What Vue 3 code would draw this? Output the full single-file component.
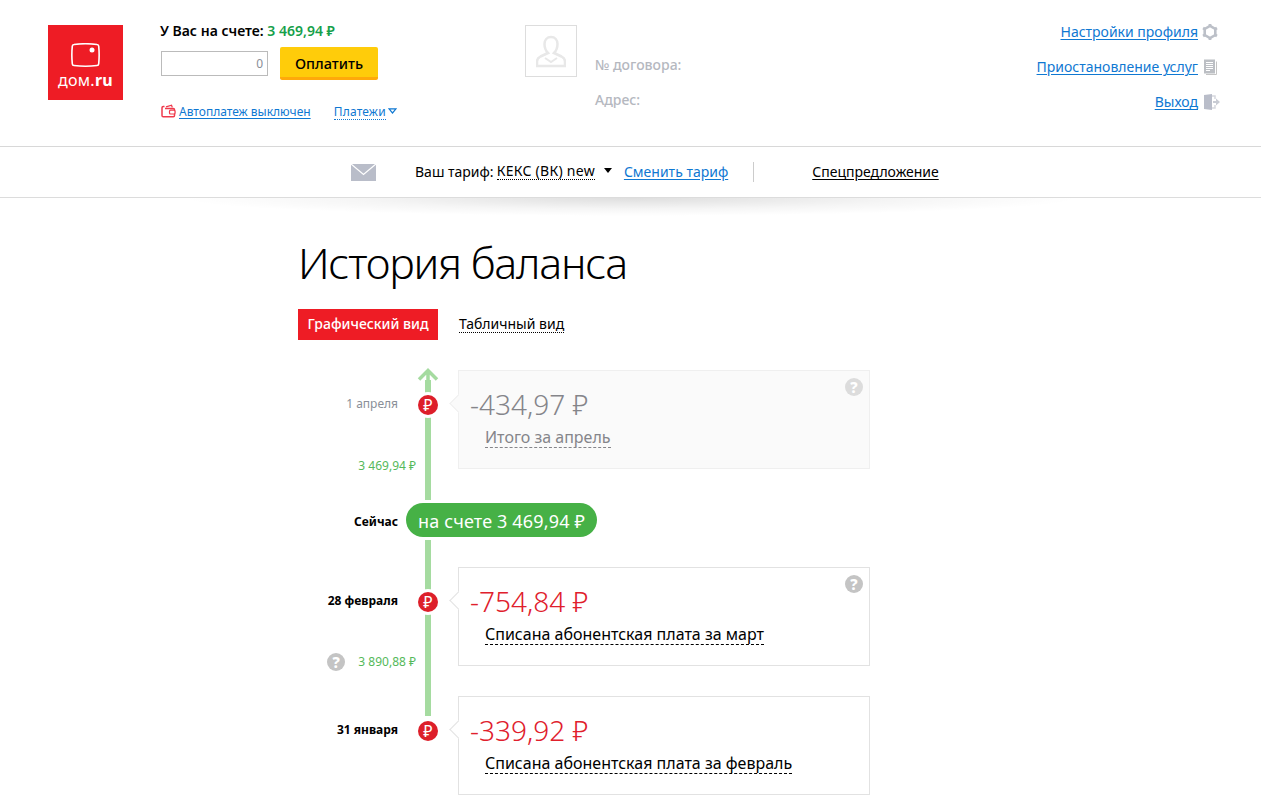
<template>
  <div class="page">
    <header class="top">
      <div class="logo">
        <svg width="29" height="25" viewBox="0 0 29 25">
          <path d="M3 1.500C10 .6 19 .6 26 1.500 27 1.600 27.600 2.200 27.700 3.200 28.300 9 28.300 15 27.700 20.800 27.600 21.800 27 22.400 26 22.500 19 23.400 10 23.400 3 22.500 2 22.400 1.400 21.800 1.300 20.800.7 15 .7 9 1.300 3.200 1.400 2.200 2 1.600 3 1.500Z" fill="none" stroke="#fff" stroke-width="1.600"/>
          <circle cx="21" cy="7" r="2.500" fill="#fff"/>
        </svg>
        <div class="logo__text">дом.<b>ru</b></div>
      </div>

      <div class="pay">
        <div class="pay__balance">У Вас на счете: <span class="pay__sum">3 469,94 ₽</span></div>
        <div class="pay__form">
          <div class="pay__input">0</div>
          <button class="pay__btn">Оплатить</button>
        </div>
        <div class="pay__links">
          <svg class="pay__wallet" width="15" height="14" viewBox="0 0 15 14">
            <path d="M3.500 2.500H2.200Q1 2.500 1 3.700V11.500Q1 12.800 2.200 12.800H12.300Q13.500 12.800 13.500 11.500V5.700Q13.500 4.500 12.300 4.500H4" fill="none" stroke="#ef3a4c" stroke-width="1.500"/>
            <path d="M5 2.800 10.500 1.200 11.300 3.400" fill="none" stroke="#ef3a4c" stroke-width="1.300"/>
            <rect x="8.500" y="6.200" width="5.500" height="3.800" rx="1" fill="#fff" stroke="#ef3a4c" stroke-width="1.200"/>
          </svg>
          <a class="link">Автоплатеж выключен</a>
          <a class="pay__drop">Платежи</a>
          <svg class="pay__tri" width="9" height="6" viewBox="0 0 9 6"><path d="M1 .8H8L4.500 5Z" fill="none" stroke="#0f78d2" stroke-width="1.200"/></svg>
        </div>
      </div>

      <div class="contract">
        <div class="contract__pic">
          <svg width="30" height="33" viewBox="0 0 30 33">
            <path d="M15 2c4 0 6.500 3 6.500 7s-2 7.500-3.500 9l7.500 3.500c2 1 3.500 2.500 3.500 5V31H1v-4.500c0-2.500 1.500-4 3.500-5L12 18c-1.500-1.500-3.500-5-3.500-9s2.500-7 6.500-7Z" fill="none" stroke="#e8e8e8" stroke-width="2.500"/>
            <path d="M9 23l6 4 6-4" fill="none" stroke="#e8e8e8" stroke-width="2"/>
          </svg>
        </div>
        <div class="contract__info">
          <div>№ договора:</div>
          <div>Адрес:</div>
        </div>
      </div>

      <nav class="menu">
        <div class="menu__row">
          <a class="link">Настройки профиля</a>
          <svg width="18" height="16" viewBox="0 0 18 16">
            <path d="M8 1.900 13.300 5V11L8 14.100 2.700 11V5Z" fill="none" stroke="#bcc0c8" stroke-width="2.600"/>
            <g fill="#bcc0c8">
              <rect x="6.600" y="0" width="2.800" height="2"/>
              <rect x="6.600" y="14" width="2.800" height="2"/>
              <rect x="6.600" y="0" width="2.800" height="2" transform="rotate(60 8 8)"/>
              <rect x="6.600" y="0" width="2.800" height="2" transform="rotate(120 8 8)"/>
              <rect x="6.600" y="0" width="2.800" height="2" transform="rotate(240 8 8)"/>
              <rect x="6.600" y="0" width="2.800" height="2" transform="rotate(300 8 8)"/>
            </g>
          </svg>
        </div>
        <div class="menu__row">
          <a class="link">Приостановление услуг</a>
          <svg width="18" height="16" viewBox="0 0 18 16">
            <path d="M14.500 2.500V15.500H4" fill="none" stroke="#c4c4c4"/>
            <rect x="2" y="0.500" width="11" height="14" fill="#bcbfc4"/>
            <path d="M4 3.500h7M4 5.500h7M4 7.500h7M4 9.500h7M4 11.500h4" stroke="#fff"/>
          </svg>
        </div>
        <div class="menu__row">
          <a class="link">Выход</a>
          <svg width="18" height="16" viewBox="0 0 18 16">
            <path d="M2 1 10 0V16L2 15Z" fill="#b9bdc9"/>
            <path d="M10 2h3v3M13 11v3h-3" fill="none" stroke="#d6d8de" stroke-width="1.500"/>
            <path d="M11 7h3V4.500L18 8l-4 3.500V9h-3Z" fill="#c9ccd4"/>
          </svg>
        </div>
      </nav>
    </header>

    <div class="tariff">
      <svg class="tariff__mail" width="25" height="17" viewBox="0 0 25 17">
        <path d="M0 0H25V17H0Z" fill="#b9bdc9"/>
        <path d="M0 0 12.500 10.500 25 0" fill="none" stroke="#fff" stroke-width="1.300"/>
      </svg>
      <span class="tariff__label">Ваш тариф:</span>
      <span class="tariff__name">КЕКС (ВК) new</span>
      <span class="tariff__tri"></span>
      <a class="link tariff__change">Сменить тариф</a>
      <span class="tariff__sep"></span>
      <a class="tariff__offer">Спецпредложение</a>
    </div>

    <main class="main">
      <h1 class="title">История баланса</h1>

      <div class="tabs">
        <span class="tabs__on">Графический вид</span>
        <span class="tabs__off">Табличный вид</span>
      </div>

      <div class="line">
        <svg class="line__arrow" width="22" height="22" viewBox="0 0 22 22">
          <path d="M2 11.500 11 2.500l9 9M11 3V22" fill="none" stroke="#a5dba0" stroke-width="3.500"/>
        </svg>

        <div v-for="row in rows" :key="row.date" class="row" :class="{ 'row--last': row.last }">
          <template v-if="row.now">
            <div class="row__date row__date--now">{{ row.date }}</div>
            <div class="pill">на счете 3 469,94 ₽</div>
          </template>
          <template v-else>
            <div class="row__side" :class="{ 'row__side--muted': row.muted }">
              <div class="row__date">{{ row.date }}</div>
              <div v-if="row.balance" class="row__balance">
                <span v-if="row.hint" class="hint hint--side">?</span>
                {{ row.balance }}
              </div>
            </div>
            <div class="row__dot">₽</div>
            <div class="card" :class="{ 'card--muted': row.muted }">
              <span v-if="row.help" class="hint hint--card">?</span>
              <div class="card__sum">{{ row.sum }}</div>
              <div class="card__text"><span>{{ row.text }}</span></div>
            </div>
          </template>
        </div>
      </div>
    </main>
  </div>
</template>

<script setup>
const rows = [
  { date: '1 апреля', balance: '3 469,94 ₽', sum: '-434,97 ₽', text: 'Итого за апрель', muted: true, help: true },
  { date: 'Сейчас', now: true },
  { date: '28 февраля', balance: '3 890,88 ₽', hint: true, sum: '-754,84 ₽', text: 'Списана абонентская плата за март', help: true },
  { date: '31 января', sum: '-339,92 ₽', text: 'Списана абонентская плата за февраль', last: true },
]
</script>

<style>
html, body {
  margin: 0;
  background: #fff;
  overflow: hidden;
}
</style>

<style scoped>
.page {
  font-family: "Noto Sans", "Open Sans", sans-serif;
  color: #000;
  font-size: 14px;
  height: 809px;
  overflow: hidden;
}
.link {
  color: #0f78d2;
  text-decoration: underline;
  text-underline-offset: 2px;
  cursor: pointer;
}

.top {
  display: flex;
  height: 146px;
  box-sizing: border-box;
  padding: 25px 41px 0 48px;
}
.logo {
  width: 75px;
  height: 75px;
  background: #ee1c25;
  display: flex;
  flex-direction: column;
  align-items: center;
  padding-top: 18px;
  box-sizing: border-box;
  color: #fff;
}
.logo__text {
  font-size: 16px;
  line-height: 17px;
  margin-top: 4px;
  letter-spacing: .3px;
}

.pay {
  margin-left: 37px;
  width: 365px;
}
.pay__balance {
  font-size: 14px;
  font-weight: 600;
  line-height: 18px;
  margin-top: -3px;
}
.pay__sum {
  color: #16a04a;
}
.pay__form {
  display: flex;
  align-items: flex-start;
  margin-top: 7px;
}
.pay__input {
  width: 101px;
  height: 23px;
  border: 1px solid #bbb;
  margin: 4px 12px 0 1px;
  text-align: right;
  padding-right: 4px;
  font-size: 12px;
  line-height: 23px;
  color: #8a8f98;
}
.pay__btn {
  width: 98px;
  height: 33px;
  border: 0;
  border-bottom: 3px solid #ffa90a;
  border-radius: 2px;
  background: #ffcc0a;
  font-family: inherit;
  font-size: 14.500px;
  font-weight: 500;
  padding: 2px 0 0;
  color: #000;
}
.pay__links {
  display: flex;
  align-items: center;
  margin-top: 23px;
  font-size: 12px;
  line-height: 18px;
}
.pay__wallet {
  margin: 0 3px 2px 1px;
}
.pay__drop {
  margin-left: 23px;
  color: #0f78d2;
  border-bottom: 1px dotted #0f78d2;
  line-height: 15px;
  letter-spacing: .2px;
}
.pay__tri {
  margin: 0 0 3px 2px;
}

.contract {
  display: flex;
  width: 400px;
}
.contract__pic {
  width: 50px;
  height: 50px;
  border: 1px solid #ddd;
  display: flex;
  align-items: center;
  justify-content: center;
}
.contract__info {
  margin-left: 18px;
  padding-top: 30px;
  color: #b5b8bf;
  font-size: 14px;
  font-weight: 500;
  line-height: 19px;
  display: flex;
  flex-direction: column;
  gap: 16px;
}

.menu {
  flex: 1;
  display: flex;
  flex-direction: column;
  align-items: flex-end;
  gap: 17px;
  margin-top: -2px;
}
.menu__row {
  display: flex;
  align-items: center;
  gap: 4px;
  font-size: 14px;
  line-height: 18px;
}

.tariff {
  height: 50px;
  box-sizing: content-box;
  border-top: 1px solid #d8d8d8;
  border-bottom: 1px solid #dcdcdc;
  display: flex;
  align-items: center;
  padding-left: 351px;
  position: relative;
  font-size: 14px;
  background: #fff;
}
.tariff::after {
  content: "";
  position: absolute;
  left: 180px;
  right: 180px;
  top: 100%;
  height: 18px;
  margin-top: 1px;
  background: radial-gradient(ellipse 50% 100% at 50% 0, rgba(0, 0, 0, .13), rgba(0, 0, 0, .04) 60%, transparent 100%);
}
.tariff__mail {
  margin: 0 39px 0 0;
}
.tariff__label {
  margin: -2px 3px 0 0;
}
.tariff__name {
  border-bottom: 1px dotted #000;
  line-height: 17px;
  letter-spacing: .27px;
  margin-top: -2px;
}
.tariff__tri {
  width: 0;
  height: 0;
  border: 4px solid transparent;
  border-top: 5px solid #000;
  border-bottom: 0;
  margin: 0 12px 4px 9px;
}
.tariff__change {
  margin-top: -2px;
}
.tariff__sep {
  width: 1px;
  height: 20px;
  background: #ccc;
  margin: 0 58px 0 25px;
}
.tariff__offer {
  color: #000;
  text-decoration: underline;
  text-underline-offset: 2px;
  margin-top: -2px;
}

.main {
  padding-left: 298px;
}
.title {
  margin: 36px 0 0 0;
  font-size: 43px;
  font-weight: 300;
  line-height: 58px;
  letter-spacing: -1.200px;
}
.tabs {
  display: flex;
  align-items: center;
  margin-top: 17px;
  font-size: 14px;
}
.tabs__on {
  background: #ee1c25;
  color: #fff;
  width: 140px;
  height: 31px;
  line-height: 30px;
  text-align: center;
  font-weight: 500;
  font-size: 14px;
}
.tabs__off {
  margin: -1px 0 0 21px;
  border-bottom: 1px dotted #000;
  line-height: 17px;
}

.line {
  position: relative;
  margin-top: 30px;
  width: 572px;
}
.line::before {
  content: "";
  position: absolute;
  left: 127px;
  top: 10px;
  width: 6px;
  height: 336px;
  background: #a5dba0;
}
.line__arrow {
  position: absolute;
  left: 119px;
  top: -2px;
  z-index: 1;
}
.row {
  position: relative;
  display: flex;
  margin-bottom: 30px;
}
.row:nth-of-type(2) {
  margin-top: 34px;
}
.row--last {
  margin-bottom: 0;
}
.row__side {
  width: 100px;
  height: 99px;
  flex: none;
  display: flex;
  flex-direction: column;
  align-items: flex-end;
  justify-content: space-between;
  padding: 26px 0 0;
  box-sizing: border-box;
}
.row__date {
  font-size: 12px;
  font-weight: 700;
  line-height: 16px;
}
.row__date--now {
  width: 100px;
  height: 34px;
  text-align: right;
  line-height: 37px;
  flex: none;
}
.row__side--muted .row__date {
  font-weight: 400;
  color: #8a8f98;
}
.row__balance {
  display: flex;
  align-items: center;
  font-size: 12px;
  color: #55b95a;
  line-height: 16px;
  margin-bottom: -5px;
  white-space: pre;
  margin-right: -18px;
}
.row__dot {
  position: absolute;
  left: 120px;
  top: 25px;
  width: 20px;
  height: 20px;
  border-radius: 50%;
  background: #dd1f2a;
  box-shadow: 0 0 0 3px #fff;
  color: #fff;
  font-size: 16px;
  line-height: 20px;
  text-align: center;
  z-index: 1;
}
.pill {
  position: relative;
  margin-left: 8px;
  height: 34px;
  padding: 0 12px;
  border-radius: 17px;
  background: #46b146;
  box-shadow: 0 0 0 3px #fff;
  color: #fff;
  font-size: 18px;
  letter-spacing: .15px;
  line-height: 37px;
  white-space: nowrap;
}
.card {
  position: relative;
  margin-left: 60px;
  width: 412px;
  height: 99px;
  box-sizing: border-box;
  border: 1px solid #e2e2e2;
  background: #fff;
  padding: 14px 0 0 11px;
}
.card::before {
  content: "";
  position: absolute;
  left: -7px;
  top: 26px;
  width: 12px;
  height: 12px;
  background: #fff;
  border-left: 1px solid #e2e2e2;
  border-bottom: 1px solid #e2e2e2;
  transform: rotate(45deg);
}
.card--muted {
  background: #fafafa;
  border-color: #efefef;
}
.card--muted::before {
  background: #fafafa;
  border-color: #efefef;
}
.card__sum {
  font-size: 28px;
  font-weight: 300;
  line-height: 38px;
  color: #e0202c;
}
.card--muted .card__sum {
  color: #85858a;
}
.card__text {
  margin: 3px 0 0 15px;
  font-size: 16px;
  line-height: 22px;
}
.card__text span {
  border-bottom: 1px dashed #000;
  display: inline-block;
  line-height: 19px;
}
.card--muted .card__text {
  color: #85858a;
}
.card--muted .card__text span {
  border-color: #85858a;
}
.hint {
  display: inline-block;
  width: 18px;
  height: 18px;
  border-radius: 50%;
  background: #c4c4c4;
  color: #fff;
  font-size: 15px;
  font-weight: 800;
  line-height: 18px;
  text-align: center;
}
.hint--card {
  position: absolute;
  right: 6px;
  top: 7px;
}
.card--muted .hint--card {
  background: #dcdcdc;
}
.hint--side {
  margin-right: 10px;
  margin-left: -30px;
}
</style>
